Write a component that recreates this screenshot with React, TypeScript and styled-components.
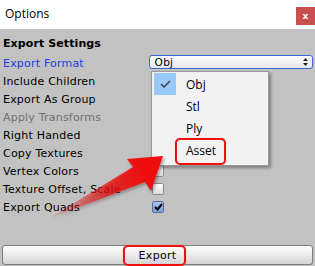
import styled, { createGlobalStyle } from "styled-components";

const GlobalStyle = createGlobalStyle`
  html, body { margin: 0; padding: 0; }
  body { width: 315px; height: 266px; overflow: hidden; background: #c2c2c2; }
`;

const Window = styled.div`
  position: relative;
  width: 315px;
  height: 266px;
  display: flex;
  flex-direction: column;
  font-family: "DejaVu Sans", Verdana, sans-serif;
`;

const TitleBar = styled.div`
  height: 29px;
  background: #ffffff;
  display: flex;
  justify-content: space-between;
  align-items: flex-start;
`;

const Title = styled.span`
  font-family: "Open Sans", "Noto Sans", sans-serif;
  font-size: 12px;
  color: #000;
  margin: 5px 0 0 5px;
`;

const CloseButton = styled.div`
  width: 19px;
  height: 18px;
  margin-top: 7px;
  background: #c75050;
  color: #fff;
  font-family: "DejaVu Sans", sans-serif;
  font-weight: bold;
  font-size: 9px;
  display: flex;
  align-items: center;
  justify-content: center;
`;

const Body = styled.div`
  flex: 1;
  background: #c2c2c2;
  display: flex;
  flex-direction: column;
  padding: 0 2px 1px 3px;
`;

const Header = styled.div`
  height: 18px;
  margin: 5px 0 2px;
  font-size: 11px;
  font-weight: bold;
  letter-spacing: 0.1px;
  color: #000;
  display: flex;
  align-items: center;
`;

const Row = styled.div`
  height: 18px;
  display: flex;
  align-items: center;
`;

const Label = styled.span<{ $tone?: "blue" | "muted" }>`
  width: 149px;
  font-size: 11px;
  letter-spacing: 0.2px;
  color: ${(p) => (p.$tone === "blue" ? "#1c3fe0" : p.$tone === "muted" ? "#727272" : "#000")};
  white-space: nowrap;
`;

const Select = styled.div`
  width: 157px;
  height: 12px;
  border: 1px solid #3a6ad8;
  border-radius: 3px;
  background: linear-gradient(#ffffff, #e6e6e6);
  display: flex;
  align-items: center;
  justify-content: space-between;
  padding: 0 4px 0 5px;
  box-sizing: content-box;
  margin-top: -2px;
  font-size: 10.5px;
  letter-spacing: 0.3px;
  color: #000;
`;

const Checkbox = styled.div<{ $checked?: boolean }>`
  width: 10px;
  height: 10px;
  border: 1px solid ${(p) => (p.$checked ? "#5a6f95" : "#8c8c8c")};
  border-radius: 2px;
  background: ${(p) => (p.$checked ? "linear-gradient(#a9c2ec, #7e9fd8)" : "linear-gradient(#ffffff, #dcdcdc)")};
  display: flex;
  align-items: center;
  justify-content: center;
`;

const Spacer = styled.div`
  flex: 1;
`;

const ExportButton = styled.div`
  height: 18px;
  margin-left: -1px;
  border: 1px solid #7d7d7d;
  border-radius: 3px;
  background: linear-gradient(#ffffff, #e2e2e2 70%, #d4d4d4);
  display: flex;
  align-items: center;
  justify-content: center;
  font-size: 11px;
  letter-spacing: 0.3px;
  color: #000;
`;

const Menu = styled.div`
  position: absolute;
  left: 151px;
  top: 71px;
  width: 116px;
  height: 92px;
  background: #f2f2f2;
  border: 1px solid #9a9a9a;
  box-shadow: 2px 2px 3px rgba(0, 0, 0, 0.35);
  padding-top: 1px;
  box-sizing: content-box;
  display: flex;
  flex-direction: column;
`;

const MenuItem = styled.div`
  height: 22px;
  display: flex;
  align-items: center;
  font-family: "Open Sans", "Noto Sans", sans-serif;
  font-size: 12px;
  color: #000;
  padding-left: 2px;
`;

const CheckCell = styled.div<{ $on?: boolean }>`
  width: 22px;
  height: 22px;
  margin-right: 10px;
  background: ${(p) => (p.$on ? "#99c9f6" : "transparent")};
  display: flex;
  align-items: center;
  justify-content: center;
`;

const Highlight = styled.div<{ $l: number; $t: number; $w: number; $h: number }>`
  position: absolute;
  left: ${(p) => p.$l}px;
  top: ${(p) => p.$t}px;
  width: ${(p) => p.$w}px;
  height: ${(p) => p.$h}px;
  border: 2px solid #f01010;
  border-radius: 5px;
  box-sizing: border-box;
  box-shadow: 0 0 1px rgba(240, 16, 16, 0.5);
`;

const Overlay = styled.svg`
  position: absolute;
  left: 0;
  top: 0;
  pointer-events: none;
`;

const rows: { label: string; tone?: "blue" | "muted"; checked?: boolean }[] = [
  { label: "Include Children" },
  { label: "Export As Group" },
  { label: "Apply Transforms", tone: "muted" },
  { label: "Right Handed" },
  { label: "Copy Textures" },
  { label: "Vertex Colors" },
  { label: "Texture Offset, Scale" },
  { label: "Export Quads", checked: true },
];

const formats = ["Obj", "Stl", "Ply", "Asset"];

export default function App() {
  return (
    <>
      <GlobalStyle />
      <Window>
        <TitleBar>
          <Title>Options</Title>
          <CloseButton>x</CloseButton>
        </TitleBar>
        <Body>
          <Header>Export Settings</Header>
          <Row>
            <Label $tone="blue">Export Format</Label>
            <Select>
              <span>Obj</span>
              <svg width="5" height="8" viewBox="0 0 5 8">
                <path d="M0 3 L2.5 0 L5 3 Z M0 5 L2.5 8 L5 5 Z" fill="#222" />
              </svg>
            </Select>
          </Row>
          {rows.map((r) => (
            <Row key={r.label}>
              <Label $tone={r.tone}>{r.label}</Label>
              <Checkbox $checked={r.checked}>
                {r.checked && (
                  <svg width="9" height="8" viewBox="0 0 9 8">
                    <path d="M1 4 L3.5 6.5 L8 1" stroke="#000" strokeWidth="2" fill="none" />
                  </svg>
                )}
              </Checkbox>
            </Row>
          ))}
          <Spacer />
          <ExportButton>Export</ExportButton>
        </Body>

        <Menu>
          {formats.map((f, i) => (
            <MenuItem key={f}>
              <CheckCell $on={i === 0}>
                {i === 0 && (
                  <svg width="11" height="8" viewBox="0 0 11 8">
                    <path d="M1 4 L4 7 L10 1" stroke="#3a3a3a" strokeWidth="1.4" fill="none" />
                  </svg>
                )}
              </CheckCell>
              {f}
            </MenuItem>
          ))}
        </Menu>

        <Overlay width="315" height="266" viewBox="0 0 315 266">
          <defs>
            <linearGradient id="arrowFill" x1="50" y1="219" x2="160" y2="160" gradientUnits="userSpaceOnUse">
              <stop offset="0" stopColor="#e01010" stopOpacity="0.05" />
              <stop offset="0.5" stopColor="#e61010" stopOpacity="0.75" />
              <stop offset="0.85" stopColor="#f00c0c" />
              <stop offset="1" stopColor="#f00c0c" />
            </linearGradient>
            <filter id="shadow" x="-20%" y="-20%" width="140%" height="140%">
              <feDropShadow dx="1.5" dy="2" stdDeviation="1.5" floodColor="#000" floodOpacity="0.35" />
            </filter>
          </defs>
          <path
            d="M48 219 L133 167 L127 159 L163 156 L151 191 L145 182 Z"
            fill="url(#arrowFill)"
            filter="url(#shadow)"
          />
        </Overlay>

        <Highlight $l={175} $t={138} $w={51} $h={27} />
        <Highlight $l={123} $t={245} $w={63} $h={21} />
      </Window>
    </>
  );
}
